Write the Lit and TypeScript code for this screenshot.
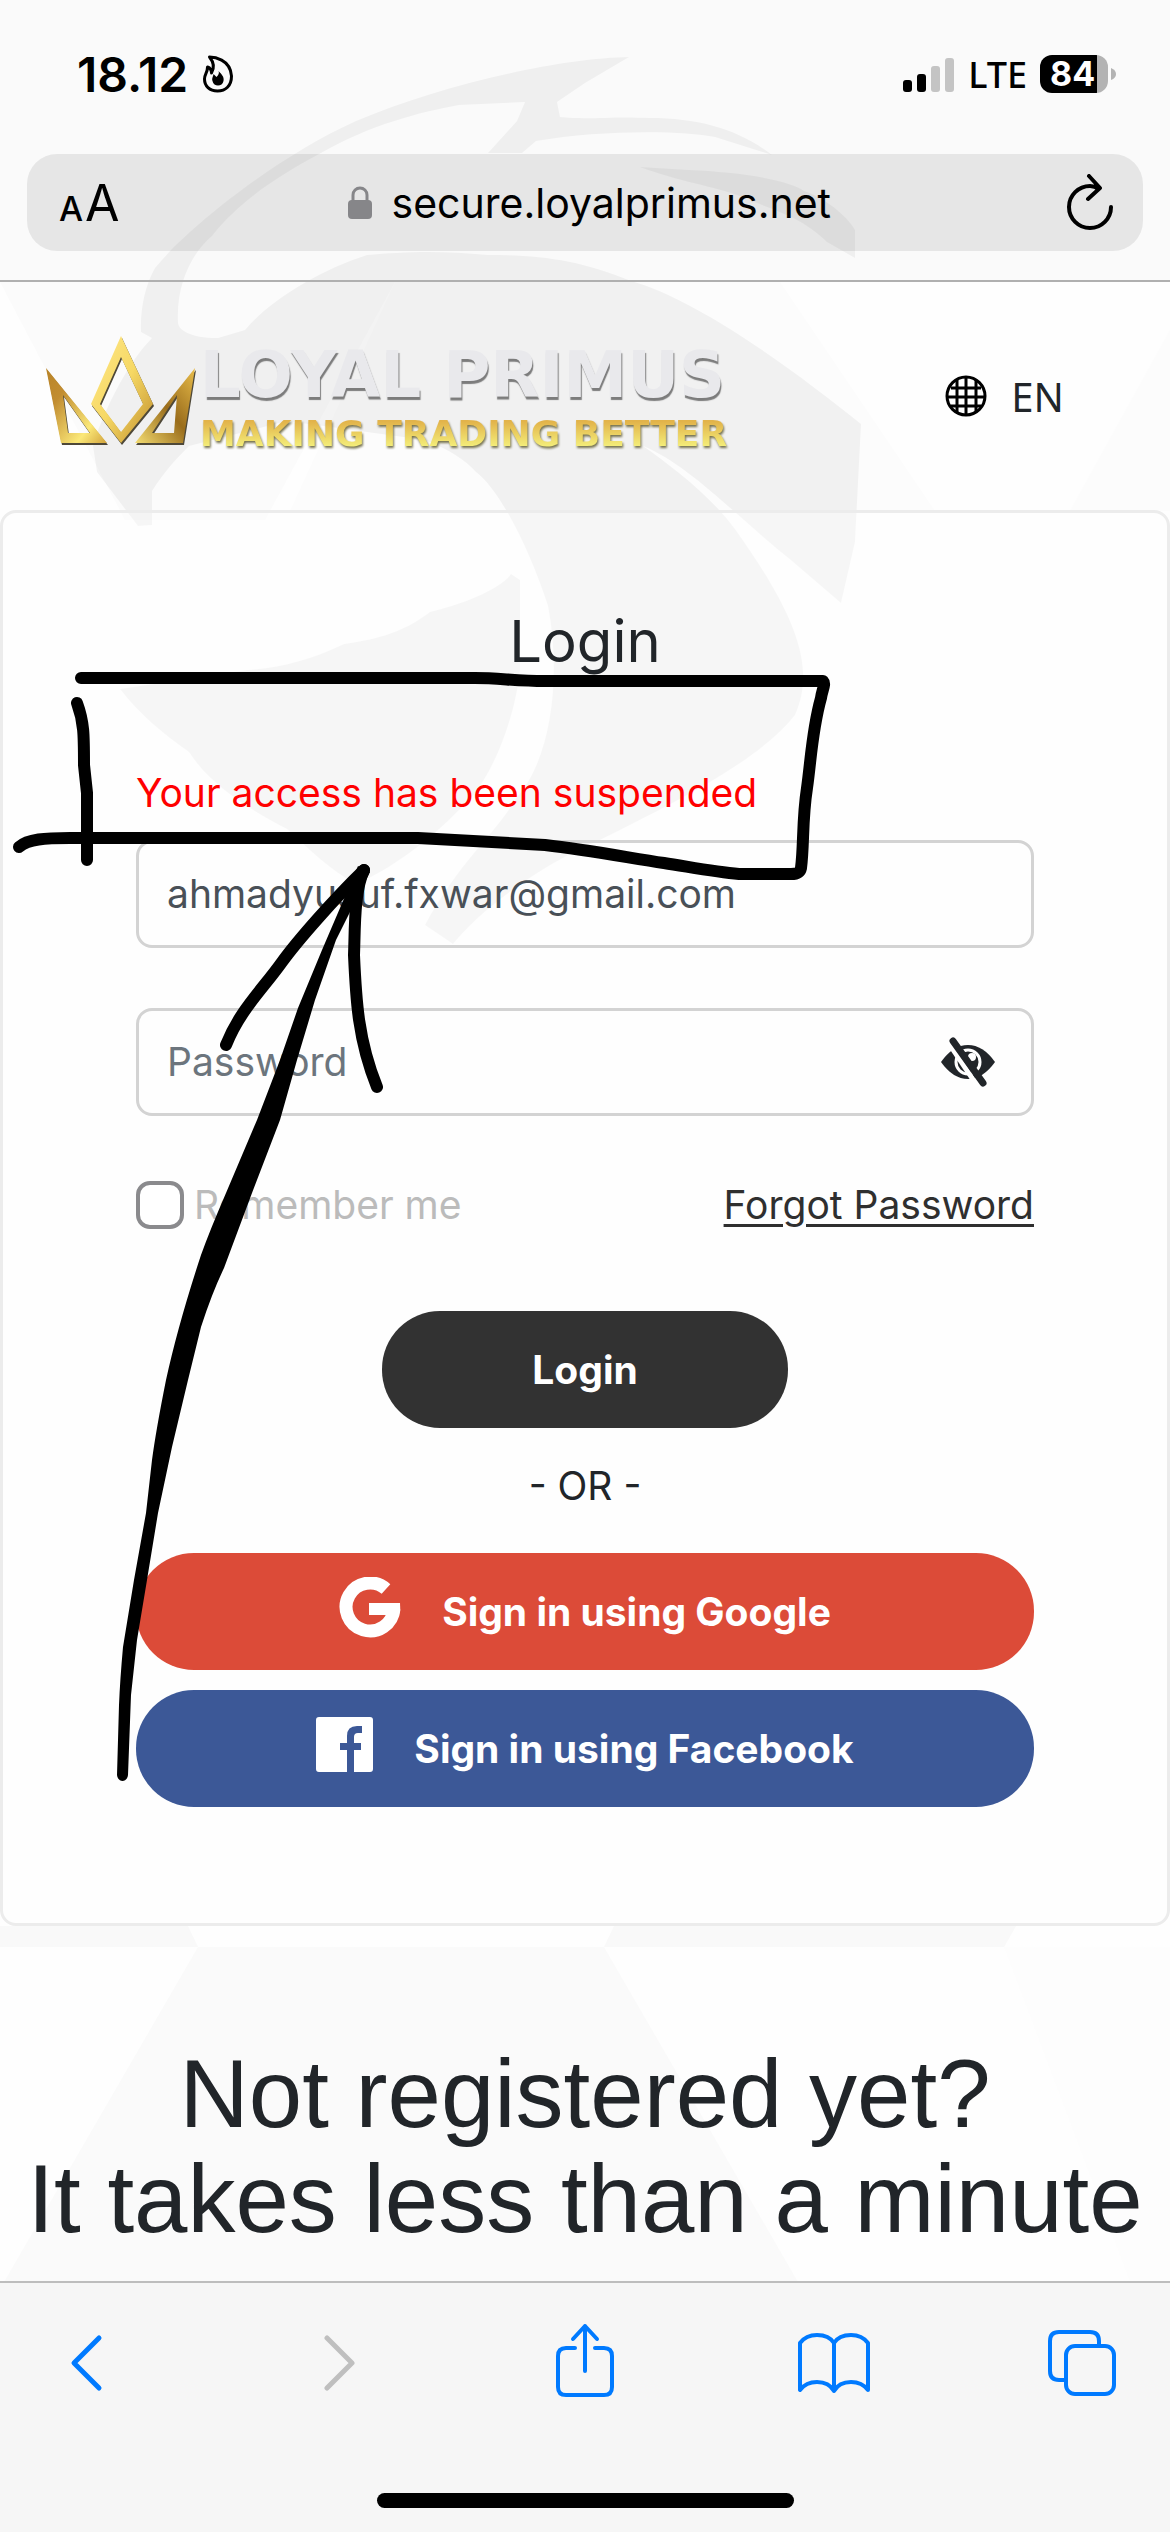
import { LitElement, html, css, svg } from "lit";
import { customElement, state } from "lit/decorators.js";

const flame = svg`
  <path d="M7 3C11 3 28 5 29 22C29 32 23 37 15 37C7 37 2 32 2 25C2 20 5 19 5 13C8 14 9 17 9 19C12 14 11 8 7 3Z" fill="none" stroke="#000" stroke-width="3" stroke-linejoin="round"/>
  <path d="M16 17C19 20 22 23 21 27C20 33 11 33 10 27C9 24 11 22 11 20L14 23C16 21 17 19 16 17Z" fill="#000"/>`;

@customElement("app-root")
export class AppRoot extends LitElement {
  @state() private showPassword = false;

  static styles = css`
    :host {
      display: block;
      font-family: Inter, "Noto Sans", sans-serif;
      color: #212529;
    }
    * {
      box-sizing: border-box;
    }
    button,
    input {
      font: inherit;
      color: inherit;
      margin: 0;
    }
    button {
      border: 0;
      padding: 0;
      background: none;
      display: flex;
    }
    svg {
      display: block;
      flex: none;
    }
    .screen {
      position: relative;
      min-height: 100vh;
      display: flex;
      flex-direction: column;
      overflow: hidden;
      background: #fefefe;
    }
    .backdrop,
    .ink {
      position: absolute;
      top: 0;
      left: 0;
      pointer-events: none;
    }
    .ink {
      z-index: 3;
    }
    .chrome,
    .page,
    .toolbar {
      position: relative;
    }

    /* browser header */
    .chrome {
      border-bottom: 2px solid #b0b0b0;
      padding: 48px 27px 29px;
    }
    .status {
      display: flex;
      justify-content: space-between;
      align-items: center;
      height: 52px;
      margin: 0 27px 54px 50px;
      color: #000;
    }
    .clock,
    .signal {
      display: flex;
      align-items: center;
    }
    .clock {
      gap: 14px;
      font-size: 48px;
      font-weight: 600;
    }
    .signal {
      gap: 13px;
      font-family: "Noto Sans", sans-serif;
      font-size: 36px;
      font-weight: 500;
    }
    .battery {
      display: flex;
      align-items: center;
      gap: 3px;
    }
    .cell {
      width: 68px;
      height: 38px;
      line-height: 38px;
      border-radius: 12px;
      background: linear-gradient(90deg, #000 57px, #b3b3b3 57px);
      color: #fff;
      font-family: Inter, sans-serif;
      font-size: 34px;
      font-weight: 700;
      padding-left: 10px;
    }
    .address {
      display: flex;
      align-items: center;
      justify-content: space-between;
      height: 97px;
      border-radius: 30px;
      background: rgba(0, 0, 0, 0.08);
      padding: 0 28px 0 32px;
      color: #000;
    }
    .reader {
      align-items: baseline;
      gap: 2px;
      font-size: 34px;
      font-weight: 500;
    }
    .reader-big {
      font-size: 50px;
      font-weight: 400;
    }
    .host {
      display: flex;
      align-items: center;
      gap: 20px;
      padding-right: 6px;
      font-size: 41px;
    }

    /* web page */
    .page {
      flex: 1;
    }
    .brand-row {
      display: flex;
      align-items: center;
      justify-content: space-between;
      height: 228px;
      padding: 0 106px 0 45px;
    }
    .brand {
      display: flex;
      align-items: center;
      gap: 4px;
      text-decoration: none;
    }
    .crown {
      margin-bottom: 10px;
    }
    .brand-text {
      display: flex;
      flex-direction: column;
      font-family: "DejaVu Sans", sans-serif;
      font-weight: 700;
      text-transform: uppercase;
      white-space: nowrap;
    }
    .brand-name {
      font-size: 64px;
      line-height: 76px;
      color: #e9e9ec;
      text-shadow: 1px 3px 1px #7c7c7c;
    }
    .brand-tag {
      font-size: 36px;
      line-height: 42px;
      background: linear-gradient(#e2b34a 20%, #f4ee7a 80%);
      background-clip: text;
      -webkit-background-clip: text;
      color: transparent;
      filter: drop-shadow(1px 2px 1px #77734f);
    }
    .lang {
      align-items: center;
      gap: 24px;
      font-family: "Noto Sans", sans-serif;
      font-size: 40px;
    }
    .card {
      border: 3px solid #ececec;
      border-radius: 16px;
      background: rgba(255, 255, 255, 0.3);
      padding: 88px 133px 116px;
      display: flex;
      flex-direction: column;
      font-size: 39px;
      line-height: 58px;
    }
    .title {
      margin: 0 0 83px;
      text-align: center;
      font-size: 58px;
      line-height: 80px;
      font-weight: 400;
    }
    .alert {
      margin: 0 0 18px;
      color: #f00;
    }
    .field {
      display: flex;
      align-items: center;
      height: 108px;
      border: 3px solid #d3d3d3;
      border-radius: 16px;
      padding: 0 36px 0 28px;
      color: #495057;
      margin-bottom: 60px;
    }
    .field input {
      flex: 1;
      min-width: 0;
      border: 0;
      padding: 0;
      outline: 0;
      background: none;
    }
    .field input::placeholder {
      color: #6c757d;
      opacity: 1;
    }
    .options {
      display: flex;
      justify-content: space-between;
      align-items: center;
      margin-bottom: 77px;
    }
    .remember {
      display: flex;
      align-items: center;
      gap: 10px;
      color: #bbb;
    }
    .tick {
      appearance: none;
      width: 48px;
      height: 48px;
      border: 4px solid #8a8a8d;
      border-radius: 14px;
      background: #fff;
    }
    .forgot {
      color: #2f2f2f;
      text-decoration-thickness: 3px;
      text-underline-offset: 5px;
    }
    .pill {
      align-items: center;
      justify-content: center;
      height: 117px;
      border-radius: 58px;
      color: #fff;
      font-weight: 700;
    }
    .submit {
      align-self: center;
      width: 406px;
      background: #323232;
    }
    .or {
      margin: 29px 0 38px;
      text-align: center;
    }
    .social {
      gap: 41px;
    }
    .social svg {
      margin-bottom: 8px;
    }
    .google {
      background: #dc4b38;
      margin-bottom: 20px;
    }
    .facebook {
      background: #3c5897;
    }
    .pitch {
      margin: 115px 0 0;
      text-align: center;
      font-family: "Liberation Sans", Arial, sans-serif;
      font-weight: 400;
      font-size: 96px;
      line-height: 105px;
    }
    .pitch span {
      display: block;
      white-space: nowrap;
    }

    /* browser toolbar */
    .toolbar {
      height: 251px;
      border-top: 2px solid #bdbdbd;
      background: #f6f6f6;
      padding: 38px 54px 24px;
      display: flex;
      flex-direction: column;
      justify-content: space-between;
      align-items: center;
    }
    .actions {
      align-self: stretch;
      display: flex;
      justify-content: space-between;
    }
    .actions button {
      width: 68px;
      justify-content: center;
    }
    .home {
      width: 417px;
      height: 15px;
      border-radius: 8px;
      background: #000;
    }
  `;

  private backdrop() {
    return svg`<svg class="backdrop" width="1170" height="2532" viewBox="0 0 1170 2532" aria-hidden="true">
      <path fill="#fafafa" d="M0 0H1170V281H0Z"/>
      <path fill="#fbfbfb" d="M0 282L125 520H265L395 282Z"/>
      <path fill="#fcfcfc" d="M395 282H780L935 511H290Z"/>
      <path fill="#fcfcfc" d="M1170 330L1070 511H1170Z"/>
      <path fill="#f9f9f9" d="M0 1926H188L198 1947H0ZM614 1926H1016L1004 1947H604Z"/>
      <path fill="#fafafa" d="M198 1947H604L798 2282H4Z"/>
      <path fill="#fdfdfd" d="M1004 1947H1170V2282H1130Z"/>
      <g fill="#000" fill-opacity="0.045">
        <path d="M629 57C560 58 440 85 356 121C280 155 190 225 155 268C145 285 140 310 141 332L152 338C125 365 100 420 93 446L97 472L138 526L152 525V491C165 470 180 455 189 446L287 421L425 440C450 450 465 460 476 472C500 490 530 550 548 606C562 680 550 760 517 797C495 835 460 860 425 925L453 944C480 910 540 865 600 840C680 800 760 760 795 715C815 670 800 620 735 529C710 495 670 465 643 446C690 465 740 520 792 561L841 603L855 542L861 424C800 375 700 300 631 281C580 260 540 255 488 255C440 250 400 252 367 255C320 270 270 300 245 330L218 338C190 338 178 330 178 322C176 280 195 250 212 236C240 200 280 175 321 153C370 125 420 112 459 105L525 102L517 121L488 153H522L536 141C600 130 680 130 715 137L772 155C740 130 700 118 650 118C610 116 590 120 560 117L557 102L585 83Z"/>
        <path d="M640 167L689 170C740 172 790 180 804 191C830 200 850 220 855 230V258L827 242C800 215 770 210 746 198C710 185 680 182 640 167Z"/>
        <path d="M511 574C500 590 460 605 430 612C400 635 370 640 344 644C310 660 280 668 247 670L120 689C140 715 165 735 189 752C210 785 250 810 287 829C310 850 330 870 356 884C390 870 430 840 459 810C490 785 515 720 520 670V580Z"/>
      </g>
    </svg>`;
  }

  private ink() {
    return svg`<svg class="ink" width="1170" height="2532" viewBox="0 0 1170 2532" aria-hidden="true">
      <g fill="none" stroke="#000" stroke-width="12" stroke-linecap="round" stroke-linejoin="round">
        <path d="M81 678H475C500 678 515 681 545 681H823C826 684 822 690 821 698C812 730 811 760 807 788C802 820 804 845 801 868C800 873 797 874 791 874H739C715 872 690 867 664 863C630 858 590 850 545 845L418 838H70C45 838 28 839 19 847"/>
        <path d="M77 703C84 722 84 735 84 765L87 793V860"/>
        <path d="M364 870C335 898 298 940 282 962C262 990 240 1010 226 1045"/>
        <path d="M364 870C354 890 355 930 354 955C356 1000 358 1040 377 1087"/>
      </g>
      <path d="M358 866L322 950L298 1008L280 1060L257 1120L226 1193Q210 1230 201 1255Q178 1325 166 1380Q156 1430 152 1460L146 1513L134 1580L123 1647Q120 1680 119 1705L117 1775C118 1783 127 1783 128 1775L131 1695L137 1640L147 1580L158 1513L172 1447L188 1380L201 1327Q212 1293 224 1268L252 1193L280 1120L297 1060L315 1000L336 940L370 872Z"/>
    </svg>`;
  }

  render() {
    return html`
      <div class="screen">
        ${this.backdrop()}
        <header class="chrome">
          <div class="status">
            <div class="clock">
              <span>18.12</span>
              <svg width="32" height="40" viewBox="0 0 31 40">${flame}</svg>
            </div>
            <div class="signal">
              <svg width="52" height="35" viewBox="0 0 52 35">
                <rect y="23" width="9" height="12" rx="3" />
                <rect x="14" y="17" width="9" height="18" rx="3" />
                <rect x="28" y="9" width="9" height="26" rx="3" fill="#c4c4c4" />
                <rect x="42" y="1" width="9" height="34" rx="3" fill="#c4c4c4" />
              </svg>
              <span>LTE</span>
              <div class="battery">
                <div class="cell">84</div>
                <svg width="5" height="12" viewBox="0 0 5 12"><path d="M0 0Q5 2 5 6T0 12Z" fill="#b3b3b3" /></svg>
              </div>
            </div>
          </div>
          <div class="address">
            <button class="reader" aria-label="Page settings"><span>A</span><span class="reader-big">A</span></button>
            <div class="host">
              <svg width="24" height="34" viewBox="0 0 24 34">
                <rect y="14" width="24" height="19" rx="4" fill="#868689" />
                <path d="M5 15V9a7 7 0 0 1 14 0v6" fill="none" stroke="#868689" stroke-width="3" />
              </svg>
              <span>secure.loyalprimus.net</span>
            </div>
            <button aria-label="Reload">
              <svg width="50" height="58" viewBox="0 0 50 58" fill="none" stroke="#000" stroke-width="4" stroke-linecap="round" stroke-linejoin="round">
                <path d="M34 15C31 13 28 12 25 12A21 21 0 1 0 46 33M24 2L35 14L23 25" />
              </svg>
            </button>
          </div>
        </header>

        <main class="page">
          <div class="brand-row">
            <a class="brand" href="#" aria-label="Loyal Primus">
              <svg class="crown" width="151" height="110" viewBox="0 0 151 110">
                <defs>
                  <linearGradient id="gold-a" x1="0" y1="0" x2="1" y2="1">
                    <stop offset="0" stop-color="#b98428" /><stop offset=".3" stop-color="#c28d31" />
                    <stop offset=".75" stop-color="#fbe878" /><stop offset="1" stop-color="#d2a33c" />
                  </linearGradient>
                  <linearGradient id="gold-b" x1="0" y1="0" x2="1" y2="1">
                    <stop offset="0" stop-color="#ffe88a" /><stop offset=".5" stop-color="#f6d864" /><stop offset="1" stop-color="#c08e2c" />
                  </linearGradient>
                  <linearGradient id="gold-c" x1="1" y1="0" x2="0" y2="1">
                    <stop offset="0" stop-color="#e9bd4a" /><stop offset=".5" stop-color="#9a6d1c" /><stop offset="1" stop-color="#f4dd72" />
                  </linearGradient>
                </defs>
                <g fill="#4e4838" fill-rule="evenodd" transform="translate(1 2)">
                  <path d="M1 32L16 107H62ZM18 59L45 97H23Z" />
                  <path d="M76 0L108 68L76 107L46 68ZM76 21L55 68L76 96L98 68Z" />
                  <path d="M150 32L138 107H90ZM132 59L129 97H107Z" />
                </g>
                <g fill-rule="evenodd">
                  <path d="M1 32L16 107H62ZM18 59L45 97H23Z" fill="url(#gold-a)" />
                  <path d="M76 0L108 68L76 107L46 68ZM76 21L55 68L76 96L98 68Z" fill="url(#gold-b)" />
                  <path d="M150 32L138 107H90ZM132 59L129 97H107Z" fill="url(#gold-c)" />
                </g>
              </svg>
              <span class="brand-text">
                <span class="brand-name">Loyal Primus</span>
                <span class="brand-tag">Making trading better</span>
              </span>
            </a>
            <button class="lang">
              <svg width="42" height="42" viewBox="0 0 42 42" fill="none" stroke="#000" stroke-width="3">
                <circle cx="21" cy="21" r="19" />
                <path d="M21 2V40M12 5V37M31 5V37M2 22H40M6 13H36M6 31H36" />
              </svg>
              <span>EN</span>
            </button>
          </div>

          <form class="card" @submit=${(e: Event) => e.preventDefault()}>
            <h1 class="title">Login</h1>
            <p class="alert" role="alert">Your access has been suspended</p>
            <div class="field">
              <input type="email" aria-label="Email" .value=${"ahmadyusuf.fxwar@gmail.com"} />
            </div>
            <div class="field">
              <input type=${this.showPassword ? "text" : "password"} aria-label="Password" placeholder="Password" />
              <button type="button" aria-label="Show password" @click=${() => (this.showPassword = !this.showPassword)}>
                <svg width="54" height="50" viewBox="0 0 54 50">
                  <path d="M0 25Q12 8 27 8T54 25Q42 42 27 42T0 25Z" fill="#212529" />
                  <circle cx="27" cy="25" r="12" fill="none" stroke="#fff" stroke-width="3" />
                  <circle cx="31" cy="20" r="4" fill="#fff" />
                  <path d="M7 5L37 50" stroke="#fff" stroke-width="5" />
                  <path d="M12 4L42 46" stroke="#212529" stroke-width="7" stroke-linecap="round" />
                </svg>
              </button>
            </div>
            <div class="options">
              <label class="remember"><input class="tick" type="checkbox" />Remember me</label>
              <a class="forgot" href="#">Forgot Password</a>
            </div>
            <button class="pill submit">Login</button>
            <p class="or">- OR -</p>
            <button type="button" class="pill social google">
              <svg width="62" height="62" viewBox="0 0 62 62">
                <path d="M47 12A24 24 0 1 0 55 32" fill="none" stroke="#fff" stroke-width="13" />
                <path d="M30 26H61Q62 32 60 38H30Z" fill="#fff" />
              </svg>
              <span>Sign in using Google</span>
            </button>
            <button type="button" class="pill social facebook">
              <svg width="57" height="55" viewBox="0 0 57 55">
                <path fill="#fff" fill-rule="evenodd" d="M3 0H54Q57 0 57 3V52Q57 55 54 55H38V33H45V26H38V20Q38 16 42 16H46V9H41Q31 9 31 19V26H24V33H31V55H3Q0 55 0 52V3Q0 0 3 0Z" />
              </svg>
              <span>Sign in using Facebook</span>
            </button>
          </form>

          <h2 class="pitch"><span>Not registered yet?</span><span>It takes less than a minute</span></h2>
        </main>

        <nav class="toolbar">
          <div class="actions">
            <button aria-label="Back">
              <svg width="36" height="78" viewBox="0 0 36 78" fill="none" stroke="#007aff" stroke-width="5" stroke-linecap="round" stroke-linejoin="round"><path d="M29 17L4 42L29 67" /></svg>
            </button>
            <button aria-label="Forward">
              <svg width="36" height="78" viewBox="0 0 36 78" fill="none" stroke="#bfbfbf" stroke-width="5" stroke-linecap="round" stroke-linejoin="round"><path d="M8 17L33 42L8 67" /></svg>
            </button>
            <button aria-label="Share">
              <svg width="58" height="78" viewBox="0 0 58 78" fill="none" stroke="#007aff" stroke-width="4" stroke-linecap="round" stroke-linejoin="round">
                <path d="M19 27H10Q2 27 2 35V66Q2 74 10 74H48Q56 74 56 66V35Q56 27 48 27H39M29 5V50M17 18L29 5L41 18" />
              </svg>
            </button>
            <button aria-label="Bookmarks">
              <svg width="72" height="78" viewBox="0 0 72 78" fill="none" stroke="#007aff" stroke-width="4" stroke-linejoin="round">
                <path d="M36 70Q31 61 19 61Q8 61 2 69V22Q8 14 19 14Q31 14 36 22Q41 14 53 14Q64 14 70 22V69Q64 61 53 61Q41 61 36 70ZM36 22V68" />
              </svg>
            </button>
            <button aria-label="Tabs">
              <svg width="68" height="78" viewBox="0 0 68 78" fill="none" stroke="#007aff" stroke-width="4">
                <rect x="18" y="25" width="48" height="48" rx="9" />
                <path d="M17 59H11Q2 59 2 50V20Q2 11 11 11H42Q51 11 51 20V24" />
              </svg>
            </button>
          </div>
          <div class="home"></div>
        </nav>
        ${this.ink()}
      </div>
    `;
  }
}
